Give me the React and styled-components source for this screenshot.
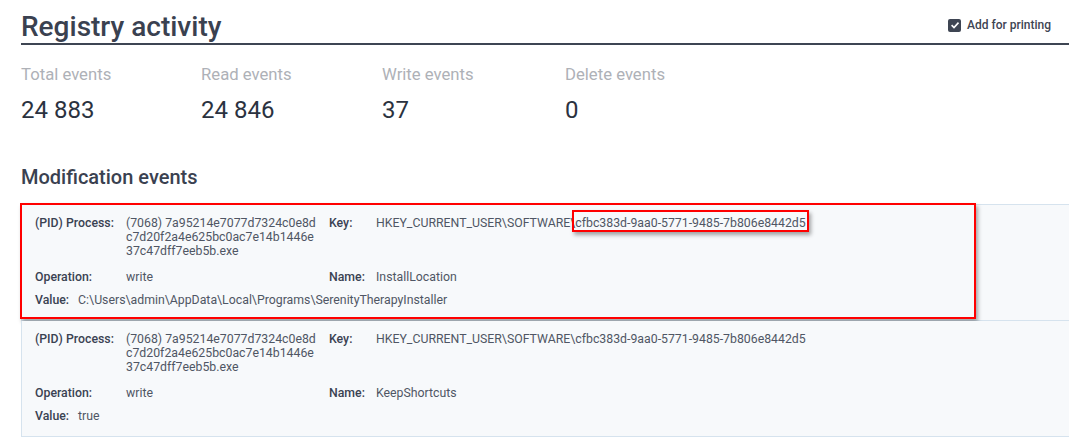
import styled, { createGlobalStyle } from "styled-components";

const GlobalStyle = createGlobalStyle`
  body {
    margin: 0;
    background: #ffffff;
    font-family: Roboto, "Liberation Sans", sans-serif;
  }
`;

const Page = styled.div`
  padding: 10px 0 0 21px;
  color: #2b3240;
`;

const Header = styled.div`
  display: flex;
  align-items: flex-start;
  justify-content: space-between;
  border-bottom: 2px solid #3e4553;
  padding-right: 18px;

  h1 {
    margin: 0;
    font-size: 28px;
    font-weight: 500;
    line-height: 33px;
    color: #3a4150;
  }
`;

const PrintToggle = styled.label`
  display: flex;
  align-items: center;
  gap: 6px;
  margin-top: 8px;
  font-size: 12px;
  font-weight: 500;
  color: #3e4553;
  cursor: pointer;
`;

const Box = styled.span`
  display: inline-flex;
  align-items: center;
  justify-content: center;
  width: 13px;
  height: 13px;
  border-radius: 2px;
  background: #3e4553;
`;

const Stats = styled.div`
  display: grid;
  grid-template-columns: 180px 181px 183px 1fr;
  margin-top: 20px;
`;

const Stat = styled.div`
  .label {
    font-size: 16.7px;
    color: #aeb1b7;
    line-height: 19px;
  }

  .value {
    margin-top: 12px;
    font-size: 24px;
    line-height: 28px;
    color: #2b3240;
  }
`;

const SectionTitle = styled.h2`
  margin: 42px 0 15px;
  font-size: 20px;
  font-weight: 500;
  line-height: 23px;
  color: #3a4150;
`;

const List = styled.div`
  border-top: 1px solid #d6e3ee;
`;

const Card = styled.div`
  position: relative;
  background: #f7f9fb;
  border: 1px solid #d6e3ee;
  border-top: none;
  border-right: none;
  padding: 11px 13px 13px;
  font-size: 12.3px;
  line-height: 14px;
`;

const Highlight = styled.span`
  position: absolute;
  left: -2px;
  top: -2px;
  width: 952px;
  height: 112px;
  border: 2px solid #ff0000;
  box-shadow: 2px 3px 4px rgba(0, 0, 0, 0.35);
  pointer-events: none;
`;

const Fields = styled.div`
  display: grid;
  grid-template-columns: 91px 203px 47px 1fr;
  row-gap: ${(p) => p.$gap}px;
`;

const Label = styled.span`
  font-weight: 500;
  color: #3a4252;
`;

const Value = styled.span`
  color: #4f5664;
  padding-right: 10px;
  word-break: ${(p) => (p.$breakAll ? "break-all" : "normal")};
`;

const InlineRow = styled.div`
  display: flex;
  gap: 9px;
  margin-top: 9px;
`;

const Mark = styled.span`
  border: 2px solid #ff0000;
  padding: 4px 1px 0 1px;
  margin-left: -3px;
  box-shadow: 2px 3px 4px rgba(0, 0, 0, 0.35);
`;

const stats = [
  ["Total events", "24 883"],
  ["Read events", "24 846"],
  ["Write events", "37"],
  ["Delete events", "0"],
];

const events = [
  {
    process: "(7068) 7a95214e7077d7324c0e8dc7d20f2a4e625bc0ac7e14b1446e37c47dff7eeb5b.exe",
    keyBase: "HKEY_CURRENT_USER\\SOFTWARE\\",
    keyId: "cfbc383d-9aa0-5771-9485-7b806e8442d5",
    operation: "write",
    name: "InstallLocation",
    value: "C:\\Users\\admin\\AppData\\Local\\Programs\\SerenityTherapyInstaller",
    highlighted: true,
  },
  {
    process: "(7068) 7a95214e7077d7324c0e8dc7d20f2a4e625bc0ac7e14b1446e37c47dff7eeb5b.exe",
    keyBase: "HKEY_CURRENT_USER\\SOFTWARE\\",
    keyId: "cfbc383d-9aa0-5771-9485-7b806e8442d5",
    operation: "write",
    name: "KeepShortcuts",
    value: "true",
  },
];

function EventCard({ ev }) {
  return (
    <Card>
      {ev.highlighted && <Highlight />}
      <Fields $gap={12}>
        <Label>(PID) Process:</Label>
        <Value $breakAll>{ev.process}</Value>
        <Label>Key:</Label>
        <Value>
          {ev.keyBase}
          {ev.highlighted ? <Mark>{ev.keyId}</Mark> : ev.keyId}
        </Value>
        <Label>Operation:</Label>
        <Value>{ev.operation}</Value>
        <Label>Name:</Label>
        <Value>{ev.name}</Value>
      </Fields>
      <InlineRow>
        <Label>Value:</Label>
        <Value>{ev.value}</Value>
      </InlineRow>
    </Card>
  );
}

export default function App() {
  return (
    <Page>
      <GlobalStyle />
      <Header>
        <h1>Registry activity</h1>
        <PrintToggle>
          <Box>
            <svg width="10" height="10" viewBox="0 0 10 10">
              <path d="M1.6 5.2 L4 7.5 L8.5 2.6" fill="none" stroke="#fff" strokeWidth="1.6" />
            </svg>
          </Box>
          Add for printing
        </PrintToggle>
      </Header>
      <Stats>
        {stats.map(([label, value]) => (
          <Stat key={label}>
            <div className="label">{label}</div>
            <div className="value">{value}</div>
          </Stat>
        ))}
      </Stats>
      <SectionTitle>Modification events</SectionTitle>
      <List>
        {events.map((ev, i) => (
          <EventCard key={i} ev={ev} />
        ))}
      </List>
    </Page>
  );
}
